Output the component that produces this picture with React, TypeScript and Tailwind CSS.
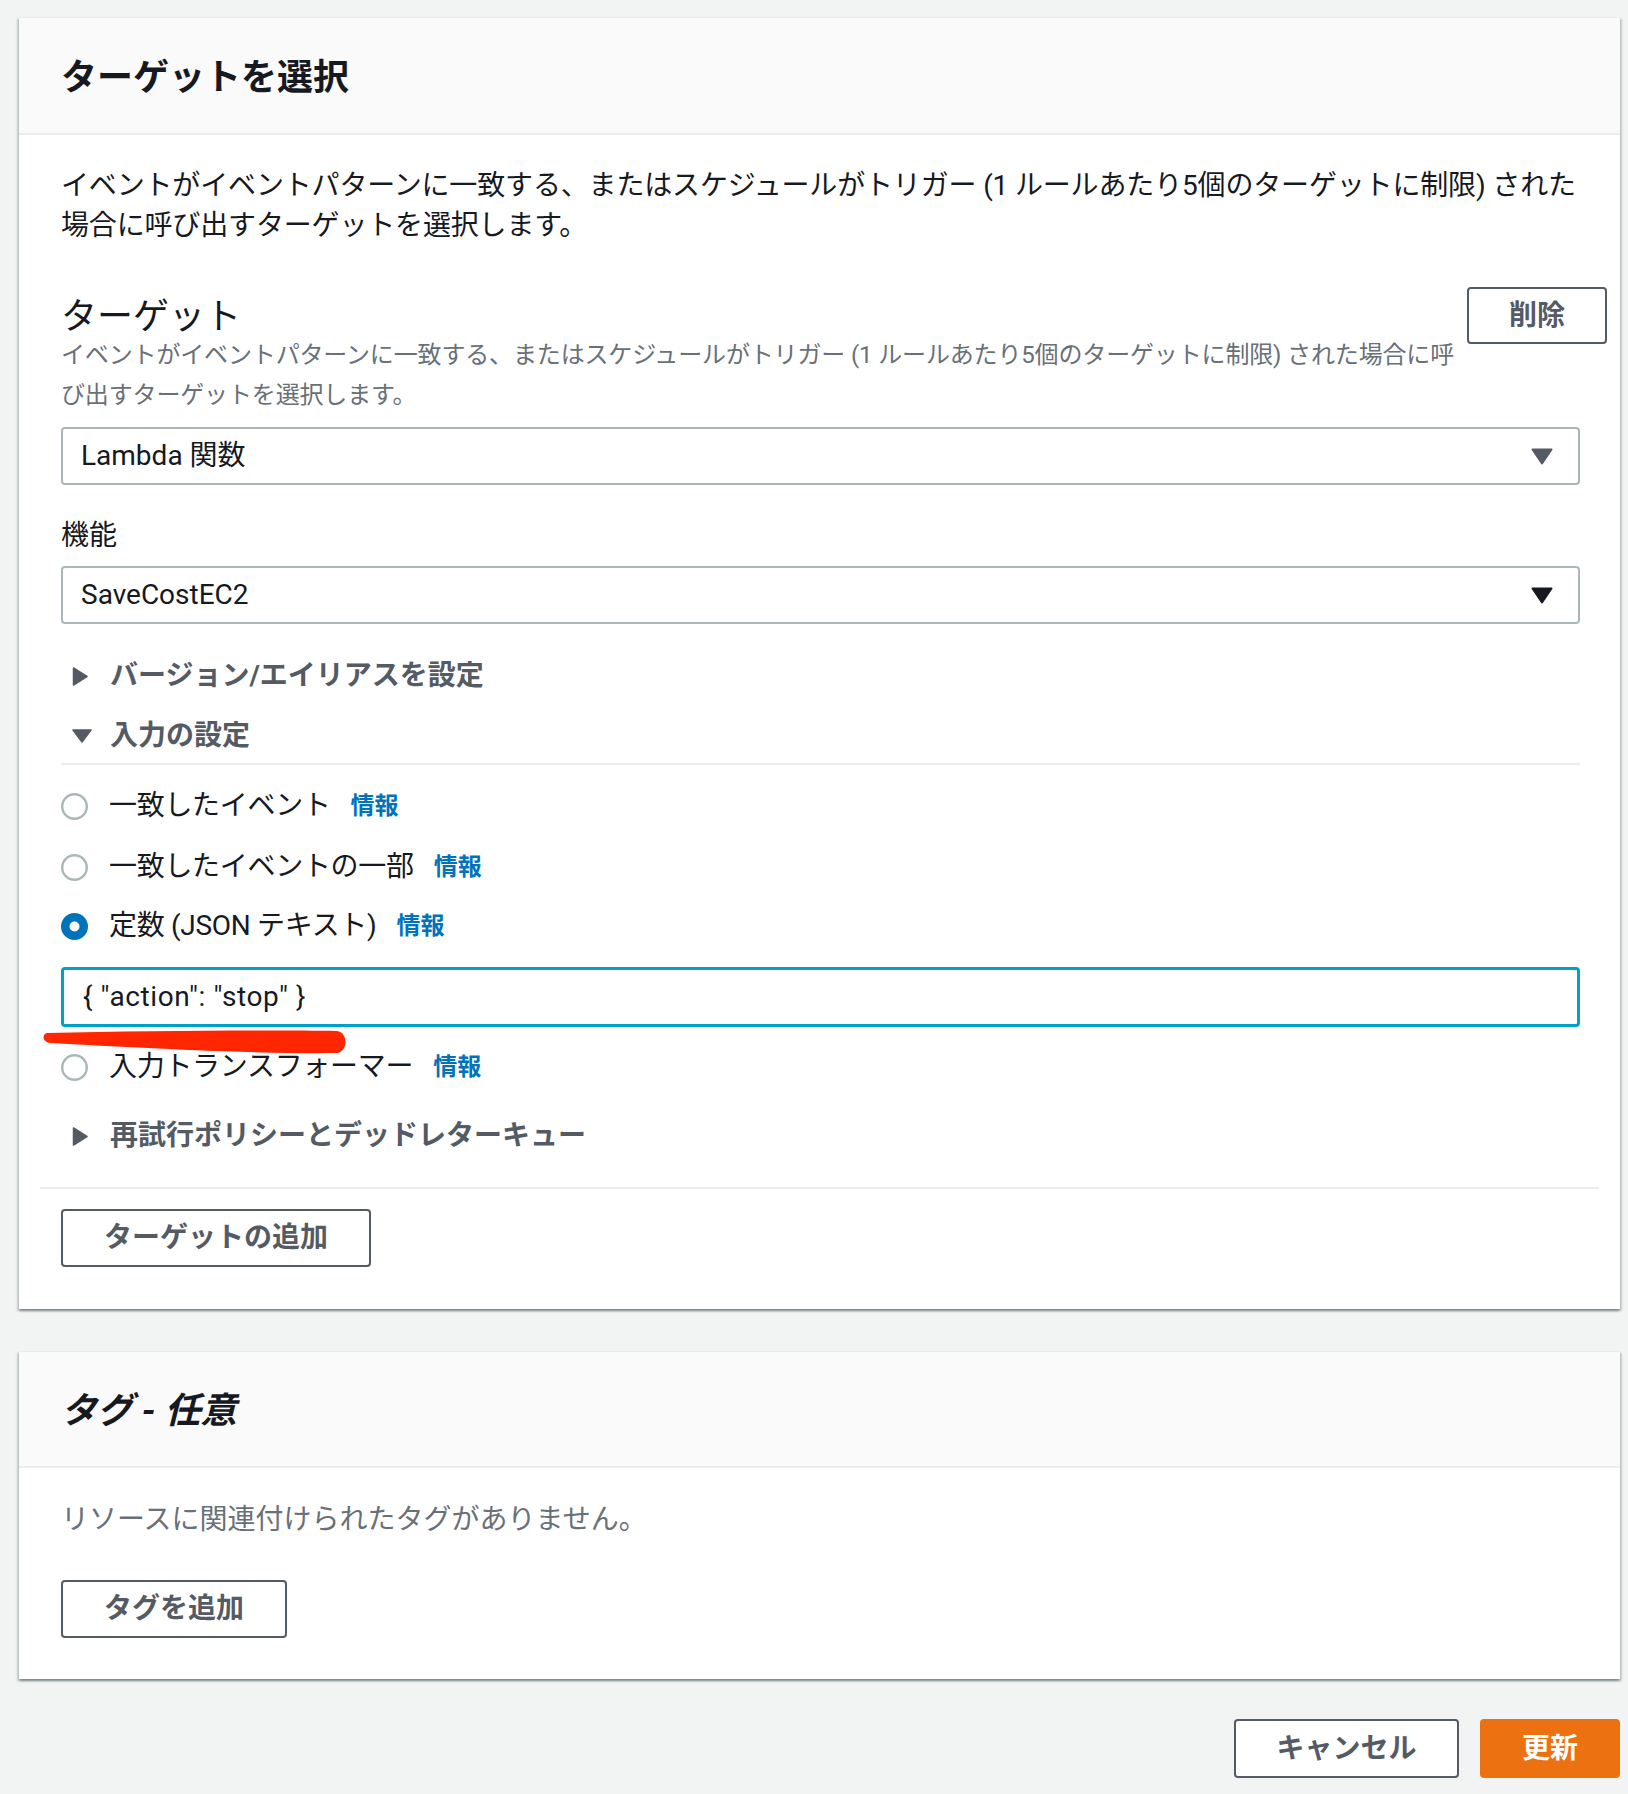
import React from "react";

const font = "font-['Roboto','Noto_Sans_CJK_JP',sans-serif]";

function Caret({ open }: { open?: boolean }) {
  if (open) {
    return (
      <svg width="20" height="14" viewBox="0 0 20 14" className="shrink-0">
        <path d="M1 1 L19 1 L10 13 Z" fill="#545b64" stroke="#545b64" strokeWidth="1.5" strokeLinejoin="round" />
      </svg>
    );
  }
  return (
    <svg width="16" height="19" viewBox="0 0 16 19" className="shrink-0">
      <path d="M1.5 1 L15 9.5 L1.5 18 Z" fill="#545b64" stroke="#545b64" strokeWidth="1.5" strokeLinejoin="round" />
    </svg>
  );
}

function Expander({ label, open }: { label: string; open?: boolean }) {
  return (
    <div className="flex items-center h-[40px]">
      <div className="w-[49px] pl-[11px] flex items-center">
        <Caret open={open} />
      </div>
      <span className="text-[28px] font-bold text-[#545b64] leading-[40px]">{label}</span>
    </div>
  );
}

function Radio({ label, checked }: { label: string; checked?: boolean }) {
  return (
    <div className="flex items-center h-[40px]">
      <svg width="27" height="27" viewBox="0 0 27 27" className="shrink-0">
        {checked ? (
          <>
            <circle cx="13.5" cy="13.5" r="13.5" fill="#0073bb" />
            <circle cx="13.5" cy="13.5" r="5" fill="#ffffff" />
          </>
        ) : (
          <circle cx="13.5" cy="13.5" r="12.3" fill="#ffffff" stroke="#aab7b8" strokeWidth="2.4" />
        )}
      </svg>
      <span className="ml-[21px] text-[28px] tracking-[-0.3px] text-[#16191f] leading-[40px]">{label}</span>
      <span className="ml-[20px] text-[24px] font-bold text-[#0073bb] leading-[40px]">情報</span>
    </div>
  );
}

function SelectBox({ value, dark }: { value: string; dark?: boolean }) {
  return (
    <div className="h-[58px] border-2 border-[#aab7b8] rounded-[4px] bg-white flex items-center justify-between pl-[18px] pr-[25px]">
      <span className="text-[28px] text-[#16191f]">{value}</span>
      <svg width="22" height="17" viewBox="0 0 22 17">
        <path d="M1.5 1.5 L20.5 1.5 L11 15.5 Z" fill={dark ? "#16191f" : "#545b64"} stroke={dark ? "#16191f" : "#545b64"} strokeWidth="2" strokeLinejoin="round" />
      </svg>
    </div>
  );
}

function OutlineButton({ label, className = "h-[58px] px-[41px]" }: { label: string; className?: string }) {
  return (
    <button className={`border-2 border-[#545b64] rounded-[4px] bg-white text-[28px] font-bold text-[#545b64] whitespace-nowrap ${className}`}>
      {label}
    </button>
  );
}

const cardShadow =
  "shadow-[0_2px_2px_0_rgba(0,28,36,0.3),2px_2px_2px_0_rgba(0,28,36,0.15),-2px_2px_2px_0_rgba(0,28,36,0.15)]";

export default function App() {
  return (
    <div className={`min-h-screen bg-[#f2f3f3] pl-[19px] pr-[8px] pt-[17px] pb-[17px] ${font}`}>
      {/* Target card */}
      <section className={`bg-white ${cardShadow}`}>
        <div className="h-[118px] bg-[#fafafa] border-t border-t-[#eaeded] border-b-2 border-b-[#eaeded] flex items-center px-[42px] pt-[4px]">
          <h2 className="text-[36px] font-bold text-[#16191f]">ターゲットを選択</h2>
        </div>

        <div className="px-[21px] pt-[31px] pb-[42px]">
          <p className="px-[21px] text-[28px] leading-[40px] tracking-[-0.16px] text-[#16191f] whitespace-nowrap">
            イベントがイベントパターンに一致する、またはスケジュールがトリガー (1 ルールあたり5個のターゲットに制限) された
            <br />
            場合に呼び出すターゲットを選択します。
          </p>

          <div className="mt-[41px] pl-[21px] pr-[19px]">
            <div className="flex justify-between items-start">
              <div>
                <h3 className="pt-[12px] text-[36px] leading-[36px] text-[#16191f]">ターゲット</h3>
                <p className="text-[24px] leading-[40px] tracking-[-0.15px] text-[#687078] whitespace-nowrap">
                  イベントがイベントパターンに一致する、またはスケジュールがトリガー (1 ルールあたり5個のターゲットに制限) された場合に呼
                  <br />
                  び出すターゲットを選択します。
                </p>
              </div>
              <OutlineButton label="削除" className="h-[57px] w-[140px] -mr-[27px] shrink-0" />
            </div>

            <div className="mt-[12px]">
              <SelectBox value="Lambda 関数" />
            </div>

            <div className="mt-[31px] text-[28px] leading-[40px] text-[#16191f]">機能</div>
            <div className="mt-[10px]">
              <SelectBox value="SaveCostEC2" dark />
            </div>

            <div className="mt-[32px]">
              <Expander label="バージョン/エイリアスを設定" />
            </div>
            <div className="mt-[20px]">
              <Expander label="入力の設定" open />
            </div>
            <div className="mt-[7px] h-[2px] bg-[#eaeded]" />

            <div className="mt-[21px]">
              <Radio label="一致したイベント" />
            </div>
            <div className="mt-[21px]">
              <Radio label="一致したイベントの一部" />
            </div>
            <div className="mt-[19px]">
              <Radio label="定数 (JSON テキスト)" checked />
            </div>

            <div className="relative mt-[21px]">
              <div className="h-[60px] border-[3px] border-[#00a1c9] rounded-[4px] bg-white flex items-center pl-[19px] text-[28px] tracking-[0.6px] text-[#16191f]">
                {'{ "action": "stop" }'}
              </div>
              <svg
                width="310"
                height="28"
                viewBox="0 0 310 28"
                className="absolute left-[-19px] top-[62px] pointer-events-none"
              >
                <path
                  d="M5 4 C100 2 220 1 295 2 C305 3 307 20 296 24 C220 25 120 20 8 14 C0 13 0 5 5 4 Z"
                  fill="#ff2600"
                />
              </svg>
            </div>

            <div className="mt-[20px]">
              <Radio label="入力トランスフォーマー" />
            </div>

            <div className="mt-[29px]">
              <Expander label="再試行ポリシーとデッドレターキュー" />
            </div>
          </div>

          <div className="mt-[31px] h-[2px] bg-[#eaeded]" />

          <div className="mt-[20px] px-[21px]">
            <OutlineButton label="ターゲットの追加" />
          </div>
        </div>
      </section>

      {/* Tags card */}
      <section className={`mt-[42px] bg-white ${cardShadow}`}>
        <div className="h-[117px] bg-[#fafafa] border-t border-t-[#eaeded] border-b-2 border-b-[#eaeded] flex items-center px-[42px] pt-[3px]">
          <h2 className="text-[36px] font-bold italic text-[#16191f]">タグ - 任意</h2>
        </div>
        <div className="px-[42px] pt-[32px] pb-[41px]">
          <p className="text-[28px] leading-[40px] text-[#687078]">リソースに関連付けられたタグがありません。</p>
          <div className="mt-[40px]">
            <OutlineButton label="タグを追加" />
          </div>
        </div>
      </section>

      {/* Footer actions */}
      <div className="mt-[40px] flex justify-end gap-[21px]">
        <OutlineButton label="キャンセル" className="h-[59px] w-[225px]" />
        <button className="h-[59px] w-[140px] rounded-[4px] bg-[#ec7211] border-2 border-[#ec7211] text-[28px] font-bold text-white">
          更新
        </button>
      </div>
    </div>
  );
}
